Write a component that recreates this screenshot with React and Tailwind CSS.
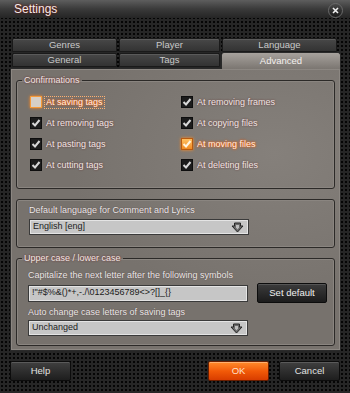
import React from 'react';

const font = { fontFamily: '"Liberation Sans", Arial, sans-serif' };

function Check({ checked, hot, focus }) {
    // --- Checkbox square ---
    let box = 'bg-[#1c1c1c] border-[#0e0e0e]';
    if (focus) box = 'bg-[#d6cfc7] border-[#f59a3a] shadow-[0_0_3px_#ff8a20]';
    if (hot) box = 'bg-gradient-to-b from-[#ffc060] to-[#f08a20] border-[#b85a10] shadow-[0_0_3px_#ff8a20]';
    return (
        <span className={`w-[12px] h-[12px] border flex items-center justify-center shrink-0 ${box}`}>
            {checked && (
                <svg width="10" height="10" viewBox="0 0 10 10">
                    <path d="M1.5 5 L4 7.5 L8.5 2" fill="none" stroke={hot ? '#fff4e0' : '#d8d8d8'} strokeWidth="2" />
                </svg>
            )}
        </span>
    );
}

function CheckRow({ label, checked, hot, focus }) {
    const textCls = hot || focus
        ? 'text-[#fff0e0] [text-shadow:0_0_3px_#ff5a00,0_0_2px_#ff5a00]'
        : 'text-[#efe8e6] [text-shadow:0_0_2px_rgba(90,20,20,0.8)]';
    return (
        <div className="flex items-center gap-[3px] h-[12px]">
            <Check checked={checked} hot={hot} focus={focus} />
            <span className={`text-[9px] leading-[11px] px-[1px] ${focus ? 'outline-1 outline-dotted outline-[#ffb070]' : ''} ${textCls}`}>
                {label}
            </span>
        </div>
    );
}

function ComboArrow() {
    return (
        <svg width="13" height="11" viewBox="0 0 13 11">
            <path d="M3.5 1 H9.5 V4 H12 L6.5 10 L1 4 H3.5 Z" fill="#6a6a6a" stroke="#262626" strokeWidth="1" />
            <path d="M5 3 H8 V5.5 L6.5 7.5 L5 5.5 Z" fill="#bdbdbd" />
        </svg>
    );
}

function Combo({ value }) {
    return (
        <div className="w-[220px] h-[16px] border border-[#3a3a3a] bg-[#c6c6c6] shadow-[inset_0_0_0_1px_#e4e4e4] flex items-center justify-between pl-[3px] pr-[4px]">
            <span className="text-[9px] text-[#1c1c1c]">{value}</span>
            <ComboArrow />
        </div>
    );
}

function Tab({ label, w, selected }) {
    if (selected) {
        return (
            <div className={`${w} h-[17px] -mt-[1px] rounded-t-[3px] bg-gradient-to-b from-[#a7a29d] to-[#7b7671] border border-b-0 border-[#2a2a2a] flex items-start justify-center pt-[1px] text-[9.5px] text-[#f4f0ee]`}>
                {label}
            </div>
        );
    }
    return (
        <div className={`${w} h-[14px] rounded-t-[2px] bg-gradient-to-b from-[#484848] to-[#333] border border-[#1a1a1a] shadow-[inset_0_1px_0_#5a5a5a] flex items-center justify-center text-[9.5px] text-[#c9c9c9]`}>
            {label}
        </div>
    );
}

function DarkButton({ label, w }) {
    return (
        <button className={`${w} h-[20px] border border-[#0c0c0c] rounded-[2px] bg-gradient-to-b from-[#404040] to-[#1e1e1e] shadow-[inset_0_1px_0_#5a5a5a] text-[9.5px] text-[#e2e2e2]`}>
            {label}
        </button>
    );
}

export default function App() {
    const legend = 'ml-[5px] px-[2px] text-[9px] leading-[11px] text-[#efe8e6] [text-shadow:0_0_2px_rgba(110,20,20,0.9)]';
    return (
        <div
            style={font}
            className="w-[350px] h-[393px] overflow-hidden flex flex-col bg-[#262626] bg-[radial-gradient(circle,#050505_1px,transparent_1.4px)] bg-size-[4px_4px]"
        >
            {/* --- Title bar --- */}
            <div className="h-[18px] shrink-0 flex items-center justify-between pl-[14px] pr-[7px] bg-gradient-to-b from-[#5e5e5e] via-[#3a3a3a] to-[#252525]">
                <span className="text-[12px] text-[#f2ecec] [text-shadow:0_0_3px_#6a1a10,0_0_1px_#6a1a10]">Settings</span>
                <span className="w-[15px] h-[15px] rounded-full bg-gradient-to-b from-[#4a4a4a] to-[#1a1a1a] border border-[#6a6a6a] flex items-center justify-center mt-[3px]">
                    <svg width="7" height="7" viewBox="0 0 7 7">
                        <path d="M1 1 L6 6 M6 1 L1 6" stroke="#f0f0f0" strokeWidth="1.6" />
                    </svg>
                </span>
            </div>

            {/* --- Tabs --- */}
            <div className="mt-[20px] pl-[12px] flex flex-col">
                <div className="flex gap-[2px]">
                    <Tab label="Genres" w="w-[105px]" />
                    <Tab label="Player" w="w-[101px]" />
                    <Tab label="Language" w="w-[115px]" />
                </div>
                <div className="flex gap-[2px] mt-[1px] items-start h-[15px]">
                    <Tab label="General" w="w-[105px]" />
                    <Tab label="Tags" w="w-[101px]" />
                    <div className="w-[120px] -ml-[1px] relative z-10">
                        <Tab label="Advanced" w="w-[120px]" selected />
                    </div>
                </div>
            </div>

            {/* --- Panel --- */}
            <div className="mx-[10px] w-[331px] h-[283px] border border-[#2a2a2a] bg-[#77726d] bg-[radial-gradient(ellipse_at_80%_30%,#85807b_0%,transparent_55%)] shadow-[inset_0_0_0_1px_#8c8782] pt-[6px] px-[5px]">
                <fieldset className="border border-[#2c2a28] rounded-[3px] shadow-[inset_0_0_0_1px_#8a8580] h-[114px] px-0">
                    <legend className={legend}>Confirmations</legend>
                    <div className="grid grid-cols-[151px_1fr] gap-y-[9px] pl-[13px] pt-[10px]">
                        <CheckRow label="At saving tags" focus />
                        <CheckRow label="At removing frames" checked />
                        <CheckRow label="At removing tags" checked />
                        <CheckRow label="At copying files" checked />
                        <CheckRow label="At pasting tags" checked />
                        <CheckRow label="At moving files" checked hot />
                        <CheckRow label="At cutting tags" checked />
                        <CheckRow label="At deleting files" checked />
                    </div>
                </fieldset>

                <div className="mt-[10px] h-[49px] border border-[#2c2a28] rounded-[3px] shadow-[inset_0_0_0_1px_#8a8580] pl-[12px] pt-[5px]">
                    <div className="text-[9px] leading-[11px] text-[#ececec] [text-shadow:0_0_1px_rgba(60,20,20,0.7)]">Default language for Comment and Lyrics</div>
                    <div className="mt-[3px]">
                        <Combo value="English [eng]" />
                    </div>
                </div>

                <fieldset className="mt-[5px] border border-[#2c2a28] rounded-[3px] shadow-[inset_0_0_0_1px_#8a8580] h-[93px] px-0">
                    <legend className={legend}>Upper case / lower case</legend>
                    <div className="pl-[11px] pt-[6px]">
                        <div className="text-[9px] leading-[11px] text-[#ececec] [text-shadow:0_0_1px_rgba(60,20,20,0.7)]">Capitalize the next letter after the following symbols</div>
                        <div className="flex items-center gap-[9px] mt-[2px]">
                            <div className="w-[220px] h-[17px] border border-[#3a3a3a] bg-[#c6c6c6] shadow-[inset_0_0_0_1px_#e4e4e4] flex items-center pl-[3px] text-[9px] text-[#1c1c1c]">
                                !"#$%&amp;()*+,-./\0123456789&lt;&gt;?[]_{'{}'}
                            </div>
                            <button className="w-[70px] h-[20px] border border-[#0c0c0c] rounded-[2px] bg-gradient-to-b from-[#3c3c3c] to-[#1c1c1c] shadow-[inset_0_1px_0_#555] text-[9.5px] text-[#f0f0f0]">
                                Set default
                            </button>
                        </div>
                        <div className="mt-[4px] text-[9px] leading-[11px] text-[#ececec] [text-shadow:0_0_1px_rgba(60,20,20,0.7)]">Auto change case letters of saving tags</div>
                        <div className="mt-[2px]">
                            <Combo value="Unchanged" />
                        </div>
                    </div>
                </fieldset>
            </div>

            {/* --- Footer buttons --- */}
            <div className="mt-[10px] flex items-center px-[10px]">
                <DarkButton label="Help" w="w-[61px]" />
                <div className="flex-1" />
                <button className="w-[61px] h-[20px] border border-[#6a1e00] rounded-[2px] bg-gradient-to-b from-[#ff8a2a] via-[#f25a08] to-[#d83c00] shadow-[inset_0_1px_0_#ffb070] text-[9.5px] text-[#ffe2cc]">
                    OK
                </button>
                <div className="w-[10px]" />
                <DarkButton label="Cancel" w="w-[61px]" />
            </div>
        </div>
    );
}
